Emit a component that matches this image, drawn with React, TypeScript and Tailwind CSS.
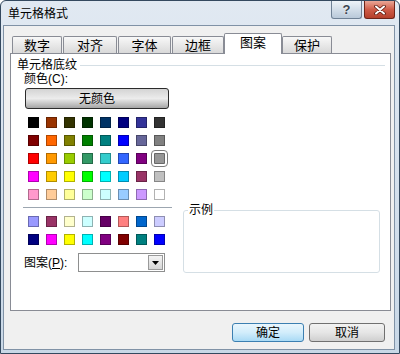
const BASIC = [
  ["bg-[#000000]", "bg-[#993300]", "bg-[#333300]", "bg-[#003300]", "bg-[#003366]", "bg-[#000080]", "bg-[#333399]", "bg-[#333333]"],
  ["bg-[#800000]", "bg-[#ff6600]", "bg-[#808000]", "bg-[#008000]", "bg-[#008080]", "bg-[#0000ff]", "bg-[#666699]", "bg-[#808080]"],
  ["bg-[#ff0000]", "bg-[#ff9900]", "bg-[#99cc00]", "bg-[#339966]", "bg-[#33cccc]", "bg-[#3366ff]", "bg-[#800080]", "bg-[#969696]"],
  ["bg-[#ff00ff]", "bg-[#ffcc00]", "bg-[#ffff00]", "bg-[#00ff00]", "bg-[#00ffff]", "bg-[#00ccff]", "bg-[#993366]", "bg-[#c0c0c0]"],
  ["bg-[#ff99cc]", "bg-[#ffcc99]", "bg-[#ffff99]", "bg-[#ccffcc]", "bg-[#ccffff]", "bg-[#99ccff]", "bg-[#cc99ff]", "bg-[#ffffff]"],
];

const CHART = [
  ["bg-[#9999ff]", "bg-[#993366]", "bg-[#ffffcc]", "bg-[#ccffff]", "bg-[#660066]", "bg-[#ff8080]", "bg-[#0066cc]", "bg-[#ccccff]"],
  ["bg-[#000080]", "bg-[#ff00ff]", "bg-[#ffff00]", "bg-[#00ffff]", "bg-[#800080]", "bg-[#800000]", "bg-[#008080]", "bg-[#0000ff]"],
];

const TABS = [
  { label: "数字", w: "w-[50px]" },
  { label: "对齐", w: "w-[54px]" },
  { label: "字体", w: "w-[53px]" },
  { label: "边框", w: "w-[52px]" },
  { label: "图案", w: "w-[58px]", active: true },
  { label: "保护", w: "w-[50px]" },
];

function Swatches({ rows, selected }: { rows: string[][]; selected?: string }) {
  return (
    <div className="grid grid-cols-8 gap-[7px] w-fit">
      {rows.flatMap((row, r) =>
        row.map((c, i) => {
          const key = `${r}-${i}`;
          return (
            <div
              key={key}
              className={`w-[11px] h-[11px] border border-black/30 ${c} ${
                selected === key ? "outline outline-1 outline-[#7c7c7c] outline-offset-2 rounded-[1px]" : ""
              }`}
            />
          );
        })
      )}
    </div>
  );
}

export default function App() {
  return (
    <div className="w-[400px] h-[354px] flex flex-col border border-[#34495f] rounded-t-[6px] bg-gradient-to-b from-[#e1e9f2] to-[#c9d8e7] font-['Liberation_Sans','Noto_Sans_CJK_SC',sans-serif] text-[12px] text-black overflow-hidden">
      {/* title bar */}
      <div className="h-[24px] shrink-0 flex items-start">
        <span className="ml-[7px] mt-[6px] leading-[14px]">单元格格式</span>
        <div className="ml-auto mr-[4px] flex gap-[2px]">
          <div className="w-[31px] h-[18px] rounded-b-[3px] border border-t-0 border-[#6f8195] bg-gradient-to-b from-[#eef3f8] via-[#d3dee9] to-[#b9c9d9] flex items-center justify-center">
            <span className="text-[13px] font-bold leading-none text-[#3b4450] [text-shadow:0_0_2px_#fff]">?</span>
          </div>
          <div className="w-[31px] h-[18px] rounded-b-[3px] border border-t-0 border-[#6e2418] bg-gradient-to-b from-[#e9a697] via-[#cf5c48] to-[#b5402b] flex items-center justify-center">
            <svg width="12" height="10" viewBox="0 0 12 10">
              <path d="M2 1.5L10 8.5M10 1.5L2 8.5" stroke="#5a1a10" strokeWidth="3.6" strokeLinecap="round" />
              <path d="M2 1.5L10 8.5M10 1.5L2 8.5" stroke="#fff" strokeWidth="2" strokeLinecap="round" />
            </svg>
          </div>
        </div>
      </div>

      {/* client area */}
      <div className="flex-1 ml-[2px] mr-[4px] mb-[3px] border border-[#8092a6] bg-[#f0f0f0] flex flex-col">
        {/* tabs */}
        <div className="mt-[7px] ml-[8px] h-[20px] flex items-end">
          {TABS.map((t, i) => (
            <div
              key={t.label}
              className={`${t.w} ${i > 0 && !t.active && !TABS[i - 1].active ? "ml-px" : ""} ${
                t.active
                  ? "h-[21px] -mb-px relative z-10 bg-white pb-[3px]"
                  : "h-[17px] bg-gradient-to-b from-[#f8f8f8] to-[#d9d9d9]"
              } border border-b-0 border-[#898c95] rounded-t-[2px] flex items-center justify-center text-[13px] leading-[15px]`}
            >
              {t.label}
            </div>
          ))}
        </div>

        {/* panel */}
        <div className="ml-[6px] w-[381px] h-[258px] border border-[#898c95] bg-white relative flex flex-col">
          <div className="mt-[4px] flex items-center">
            <span className="ml-[6px] leading-[14px]">单元格底纹</span>
            <div className="flex-1 h-px ml-[3px] mr-[5px] bg-[#d5dfe5]" />
          </div>

          <div className="flex items-end">
            <div className="w-[172px] flex flex-col">
              <span className="ml-[13px] leading-[14px]">颜色(C):</span>
              <div className="mt-[2px] ml-[14px] w-[144px] h-[21px] rounded-[3px] border border-[#2b2b2b] bg-gradient-to-b from-[#d4d4d4] via-[#ececec] to-[#a6a6a6] flex items-center justify-center leading-[14px]">
                无颜色
              </div>
              <div className="mt-[8px] ml-[17px]">
                <Swatches rows={BASIC} selected="2-7" />
              </div>
              <div className="mt-[7px] ml-[12px] w-[149px] h-px bg-[#9ca6b0]" />
              <div className="mt-[8px] ml-[17px]">
                <Swatches rows={CHART} />
              </div>
              <div className="mt-[8px] flex items-center h-[19px]">
                <span className="ml-[13px] w-[54px] leading-[14px]">
                  图案(<span className="underline">P</span>):
                </span>
                <div className="w-[87px] h-[19px] border border-[#8e8f8f] bg-white flex justify-end p-px">
                  <div className="w-[15px] h-full border border-[#9a9a9a] bg-gradient-to-b from-[#f4f4f4] to-[#d6d6d6] flex items-center justify-center">
                    <svg width="7" height="4" viewBox="0 0 7 4">
                      <path d="M0 0H7L3.5 4Z" fill="#000" />
                    </svg>
                  </div>
                </div>
              </div>
            </div>

            <fieldset className="w-[197px] h-[70px] -mb-px border border-[#d5dfe5] rounded-[3px] px-[4px]">
              <legend className="px-px leading-[14px]">示例</legend>
            </fieldset>
          </div>
        </div>

        {/* buttons */}
        <div className="mt-[12px] mr-[9px] flex justify-end gap-[5px]">
          <div className="w-[72px] h-[19px] rounded-[3px] border border-[#3c7fb1] bg-gradient-to-b from-[#eaf6fd] via-[#d2edfb] to-[#a9daf5] flex items-center justify-center leading-[14px]">
            确定
          </div>
          <div className="w-[76px] h-[19px] rounded-[3px] border border-[#707070] bg-gradient-to-b from-[#f2f2f2] via-[#e6e6e6] to-[#cfcfcf] flex items-center justify-center leading-[14px]">
            取消
          </div>
        </div>
      </div>
    </div>
  );
}
